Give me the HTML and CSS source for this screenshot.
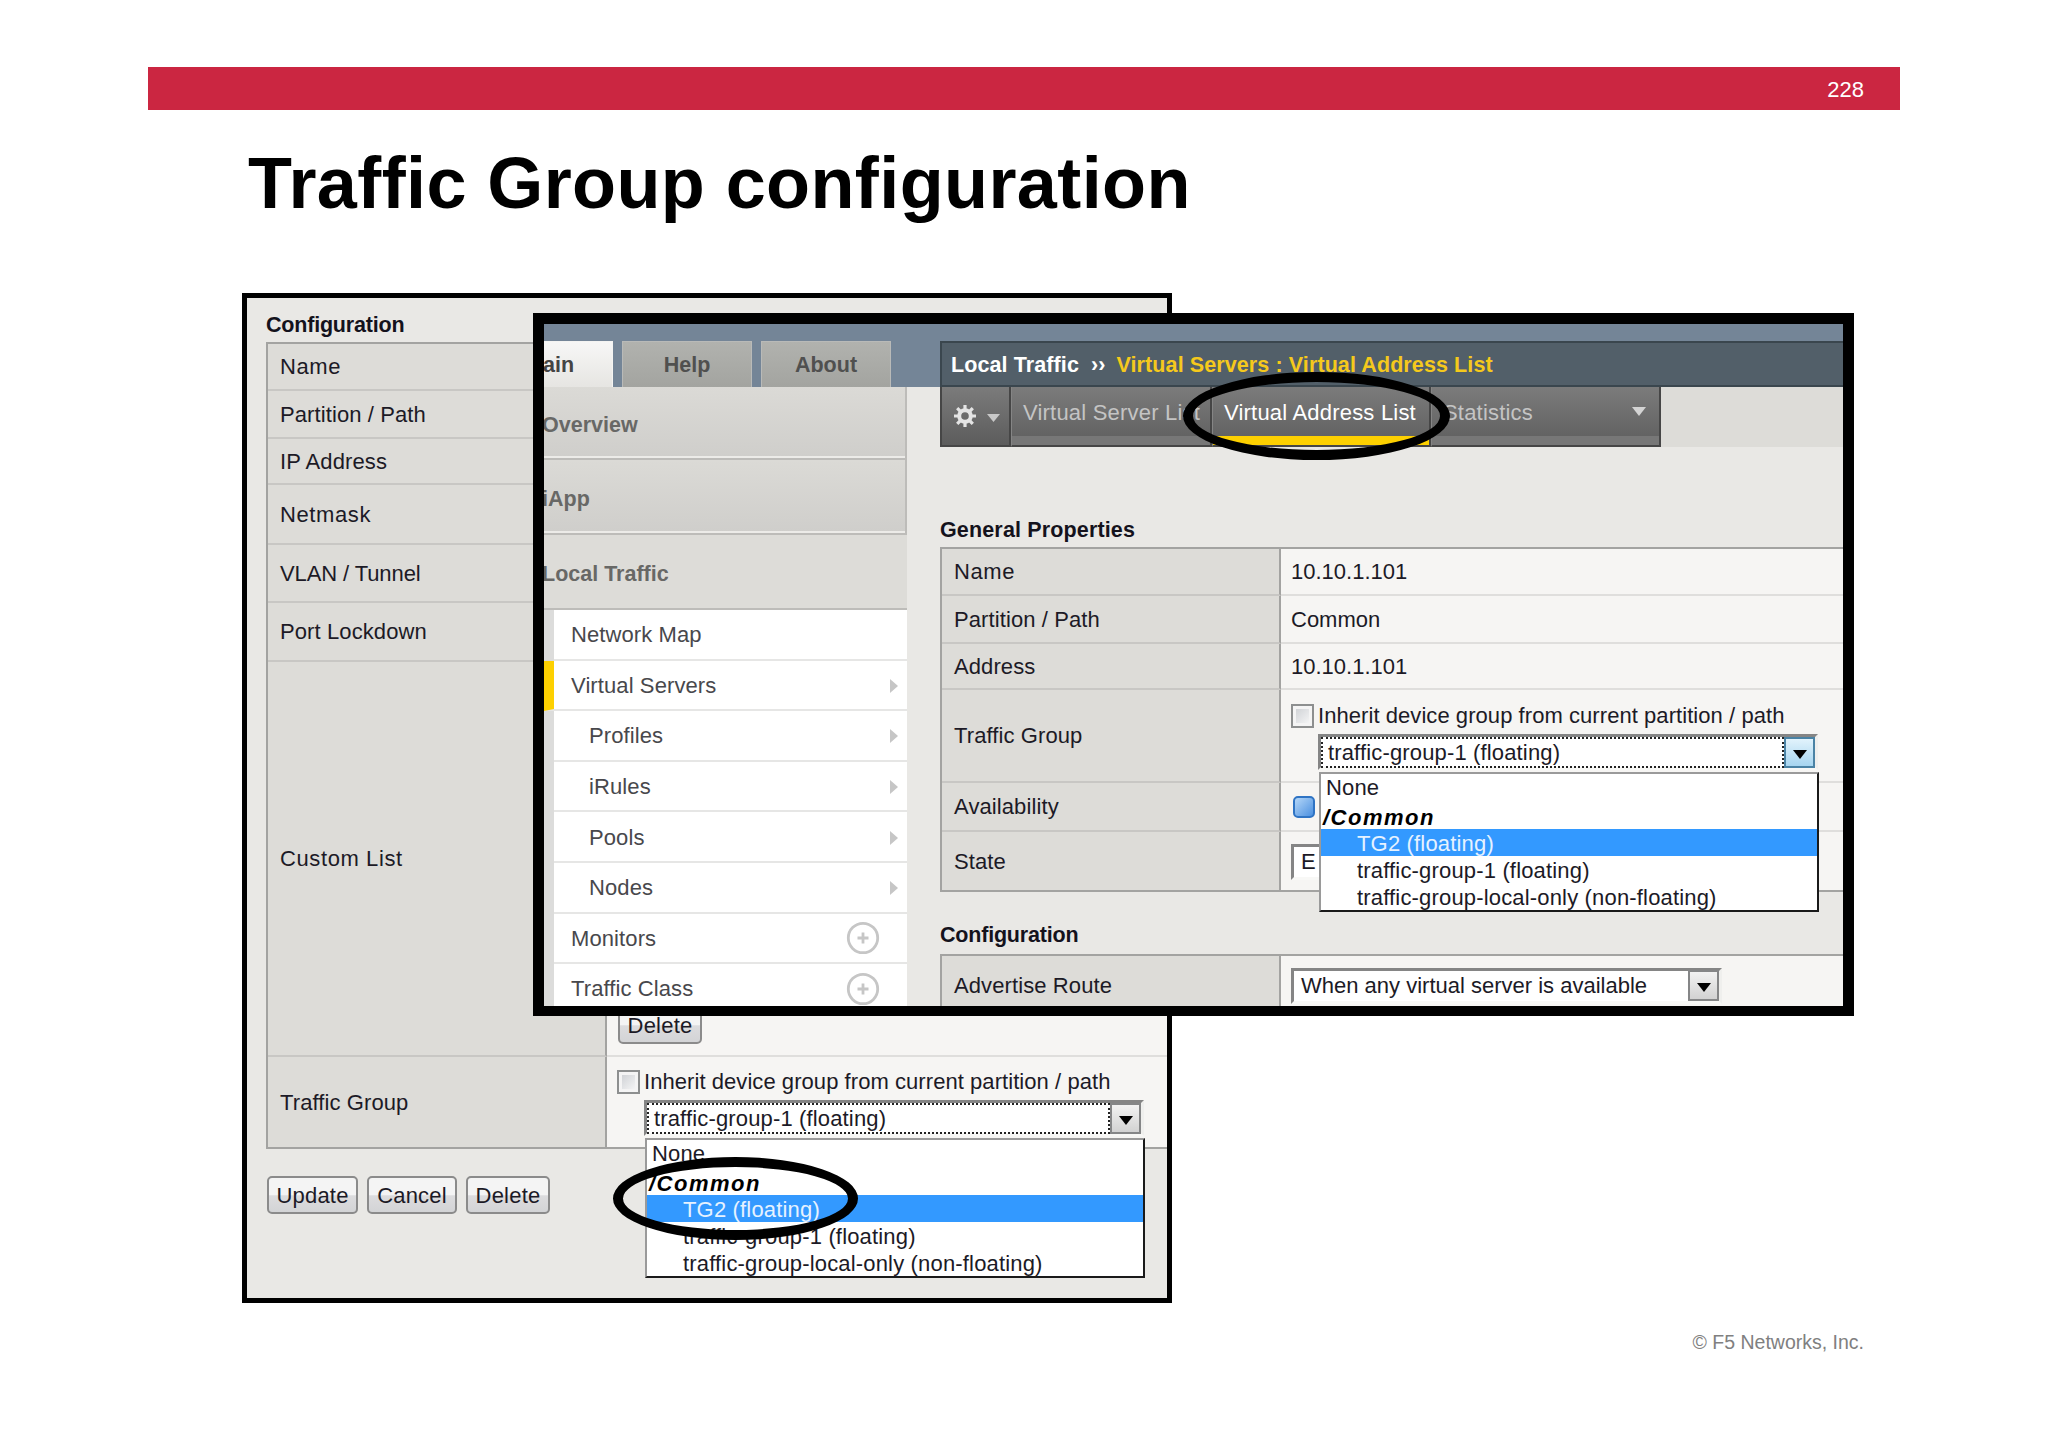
FILE: index.html
```html
<!DOCTYPE html>
<html lang="en">

<head>
    <meta charset="utf-8">
    <title>Traffic Group configuration</title>
    <link rel="stylesheet" href="styles.css">
</head>

<body>
    <div class="slide">
        <div class="slide-bar">228</div>
        <h1>Traffic Group configuration</h1>
        <div class="copyright">© F5 Networks, Inc.</div>

        <!-- Self IP window -->
        <div class="window self-ip">
            <h2 class="narrow">Configuration</h2>
            <div class="props self-ip-props">
                <div class="label wide">Name</div>
                <div class="value"></div>
                <div class="label">Partition / Path</div>
                <div class="value"></div>
                <div class="label">IP Address</div>
                <div class="value"></div>
                <div class="label wide">Netmask</div>
                <div class="value"></div>
                <div class="label tight">VLAN / Tunnel</div>
                <div class="value"></div>
                <div class="label">Port Lockdown</div>
                <div class="value"></div>
                <div class="label wide">Custom List</div>
                <div class="value list-cell"><button class="btn btn-delete">Delete</button></div>
                <div class="label last">Traffic Group</div>
                <div class="value group-cell last">
                    <label class="inherit"><span class="checkbox"></span>Inherit device group from current partition / path</label>
                    <div class="group-select">
                        <div class="select focused">
                            <span class="select-text">traffic-group-1 (floating)</span>
                            <span class="select-button"><svg width="14" height="9"><path d="M0 0H14L7 9Z"/></svg></span>
                        </div>
                        <div class="options">
                            <div class="option none">None</div>
                            <div class="option group">/Common</div>
                            <div class="option child selected">TG2 (floating)</div>
                            <div class="option child">traffic-group-1 (floating)</div>
                            <div class="option child">traffic-group-local-only (non-floating)</div>
                        </div>
                    </div>
                </div>
            </div>
            <div class="buttons">
                <button class="btn btn-update">Update</button>
                <button class="btn btn-cancel">Cancel</button>
                <button class="btn btn-delete">Delete</button>
            </div>
        </div>
        <div class="ring ring-option"></div>

        <!-- Virtual address window -->
        <div class="window virtual-address">
            <div class="sidebar">
                <div class="tabs">
                    <div class="tab active">ain</div>
                    <div class="tab">Help</div>
                    <div class="tab">About</div>
                </div>
                <div class="section first">Overview</div>
                <div class="section">iApp</div>
                <div class="section open">Local Traffic</div>
                <div class="menu">
                    <div class="menu-item">Network Map</div>
                    <div class="menu-item current">Virtual Servers<svg class="chevron" width="8" height="14"><path d="M0 0L8 7L0 14Z"/></svg></div>
                    <div class="menu-item sub">Profiles<svg class="chevron" width="8" height="14"><path d="M0 0L8 7L0 14Z"/></svg></div>
                    <div class="menu-item sub">iRules<svg class="chevron" width="8" height="14"><path d="M0 0L8 7L0 14Z"/></svg></div>
                    <div class="menu-item sub">Pools<svg class="chevron" width="8" height="14"><path d="M0 0L8 7L0 14Z"/></svg></div>
                    <div class="menu-item sub">Nodes<svg class="chevron" width="8" height="14"><path d="M0 0L8 7L0 14Z"/></svg></div>
                    <div class="menu-item">Monitors<svg class="plus" width="34" height="34"><circle cx="17" cy="17" r="14.7"/><path d="M17 11.5V22.5M11.5 17H22.5"/></svg></div>
                    <div class="menu-item">Traffic Class<svg class="plus" width="34" height="34"><circle cx="17" cy="17" r="14.7"/><path d="M17 11.5V22.5M11.5 17H22.5"/></svg></div>
                </div>
            </div>

            <div class="main">
                <div class="breadcrumb"><span>Local Traffic</span><span class="arrows">››</span><span class="path">Virtual Servers : Virtual Address List</span></div>
                <div class="toolbar">
                    <div class="tool gear">
                        <svg width="24" height="24" viewBox="-12 -12 24 24">
                            <g stroke="#e4e4e4" stroke-width="3.2">
                                <path d="M0 -11V-6M0 11V6M-11 0H-6M11 0H6M-7.8 -7.8L-4.5 -4.5M7.8 7.8L4.5 4.5M-7.8 7.8L-4.5 4.5M7.8 -7.8L4.5 -4.5"/>
                            </g>
                            <circle r="5.8" fill="none" stroke="#e4e4e4" stroke-width="4"/>
                        </svg>
                        <svg class="caret" width="13" height="8"><path d="M0 0H13L6.5 8Z" fill="#c8c8c8"/></svg>
                    </div>
                    <div class="tool list">Virtual Server List</div>
                    <div class="tool address active">Virtual Address List</div>
                    <div class="tool stats">Statistics<svg width="14" height="9"><path d="M0 0H14L7 9Z" fill="#d4d4d4"/></svg></div>
                    <div class="tool-rest"></div>
                </div>

                <h2 class="general">General Properties</h2>
                <div class="props general-props">
                    <div class="label wide">Name</div>
                    <div class="value">10.10.1.101</div>
                    <div class="label">Partition / Path</div>
                    <div class="value">Common</div>
                    <div class="label">Address</div>
                    <div class="value">10.10.1.101</div>
                    <div class="label">Traffic Group</div>
                    <div class="value group-cell">
                        <label class="inherit"><span class="checkbox"></span>Inherit device group from current partition / path</label>
                        <div class="group-select">
                            <div class="select focused hot">
                                <span class="select-text">traffic-group-1 (floating)</span>
                                <span class="select-button"><svg width="14" height="9"><path d="M0 0H14L7 9Z"/></svg></span>
                            </div>
                            <div class="options">
                                <div class="option none">None</div>
                                <div class="option group">/Common</div>
                                <div class="option child selected">TG2 (floating)</div>
                                <div class="option child">traffic-group-1 (floating)</div>
                                <div class="option child">traffic-group-local-only (non-floating)</div>
                            </div>
                        </div>
                    </div>
                    <div class="label">Availability</div>
                    <div class="value"><span class="status"></span></div>
                    <div class="label last">State</div>
                    <div class="value last">
                        <div class="select state"><span class="select-text">E</span></div>
                    </div>
                </div>

                <h2 class="config narrow">Configuration</h2>
                <div class="props config-props">
                    <div class="label">Advertise Route</div>
                    <div class="value">
                        <div class="select route">
                            <span class="select-text">When any virtual server is available</span>
                            <span class="select-button"><svg width="14" height="9"><path d="M0 0H14L7 9Z"/></svg></span>
                        </div>
                    </div>
                </div>
            </div>
        </div>
        <div class="ring ring-tab"></div>
    </div>
</body>

</html>
```
FILE: styles.css
```css
* {
    box-sizing: border-box;
}

body {
    margin: 0;
    background-color: #fff;
    font-family: "Liberation Sans", Arial, sans-serif;
    font-size: 22px;
    line-height: 26px;
    color: #1c1a26;
}

.slide {
    position: relative;
    width: 2048px;
    height: 1447px;
    padding: 67px 148px 0;
    overflow: hidden;
}

.slide-bar {
    height: 43px;
    padding-right: 36px;
    background-color: #cb2641;
    color: #fff;
    line-height: 45px;
    text-align: right;
}

h1 {
    margin: 33px 0 0 100px;
    font-size: 72px;
    line-height: 80px;
    letter-spacing: 0.4px;
    color: #000;
    white-space: nowrap;
}

h2 {
    margin: 0;
    font-size: 21.5px;
    line-height: 26px;
    letter-spacing: 0.15px;
    color: #14121c;
}

.narrow {
    letter-spacing: -0.2px;
}

.copyright {
    position: absolute;
    right: 184px;
    top: 1329px;
    font-size: 19.5px;
    color: #808080;
}

/* windows lie freely on the slide and overlap */
.window {
    position: absolute;
    border: 5px solid #000;
    background-color: #e9e8e5;
    overflow: hidden;
    white-space: nowrap;
    isolation: isolate;
}

.self-ip {
    left: 242px;
    top: 293px;
    width: 930px;
    height: 1010px;
    padding: 14px 0 0 19px;
}

.virtual-address {
    left: 533px;
    top: 313px;
    width: 1321px;
    height: 703px;
    border-width: 11px 11px 10px;
    background: linear-gradient(#748597 63px, #e9e8e5 63px);
    display: flex;
}

.ring {
    position: absolute;
    border: 10px solid #000;
    border-radius: 50%;
}

.ring-option {
    left: 613px;
    top: 1157px;
    width: 245px;
    height: 83px;
}

.ring-tab {
    left: 1183px;
    top: 372px;
    width: 267px;
    height: 88px;
}

/* property tables */
.props {
    display: grid;
    grid-template-columns: 339px 1fr;
    border-top: 2px solid #a3a3a1;
    border-left: 2px solid #a3a3a1;
}

.self-ip-props {
    margin-top: 4px;
    grid-template-rows: 47px 48px 46px 60px 58px 59px 395px 92px;
}

.general-props {
    margin-top: 4px;
    grid-template-rows: 47px 48px 46px 93px 49px 60px;
}

.config-props {
    margin-top: 6px;
    grid-template-rows: 61px;
}

.label,
.value {
    display: flex;
    align-items: center;
    padding: 1px 0 0 10px;
    border-bottom: 2px solid #c8c7c4;
}

.label {
    padding-left: 12px;
    background-color: #dddcd8;
    border-right: 2px solid #a3a3a1;
    letter-spacing: 0.1px;
}

.label.wide {
    letter-spacing: 0.6px;
}

.label.tight {
    letter-spacing: -0.1px;
}

.value {
    background-color: #f6f5f3;
    border-bottom-color: #dfdedc;
}

.last {
    border-bottom-color: #a3a3a1;
}

.list-cell {
    align-items: flex-end;
    padding: 0 0 11px 11px;
}

.group-cell {
    flex-direction: column;
    align-items: flex-start;
    padding-top: 13px;
}

.inherit {
    display: flex;
    align-items: center;
    height: 24px;
    letter-spacing: 0.06px;
}

.checkbox {
    width: 23px;
    height: 24px;
    margin-right: 4px;
    border: 2px solid #8d8f8f;
    background: linear-gradient(135deg, #c9ccd0, #fbfbfb);
    box-shadow: inset 0 0 0 3px #f4f4f4;
}

.group-select {
    position: relative;
    margin: 6px 0 0 27px;
    width: 500px;
}

.select {
    display: flex;
    align-items: center;
    height: 36px;
    border: 3px solid #858585;
    border-right-color: #efefed;
    border-bottom-color: #f8f8f6;
    background-color: #fff;
}

.select-text {
    flex: 1;
    padding-left: 7px;
}

.focused .select-text {
    height: 31px;
    padding-left: 5px;
    line-height: 28px;
    letter-spacing: 0.15px;
    border: 2px dotted #222;
}

.select-button {
    display: flex;
    align-items: center;
    justify-content: center;
    width: 31px;
    height: 31px;
    padding-top: 4px;
    border: 2px solid #858687;
    background: linear-gradient(#f2f2f2, #d2d2d2);
}

.hot .select-button {
    border-color: #4a83a5;
    background: linear-gradient(#e2f3fc, #a6d5f0);
}

.state {
    width: 150px;
}

.route {
    width: 431px;
    margin-top: -1px;
}

.options {
    position: absolute;
    z-index: 1;
    left: 1px;
    top: 38px;
    width: 500px;
    height: 140px;
    border: 2px solid #1a1a1a;
    border-top-color: #9a9a9a;
    border-left-color: #9a9a9a;
    background-color: #fff;
    overflow: hidden;
}

.option {
    height: 27px;
    line-height: 30px;
    padding-left: 5px;
    letter-spacing: 0.17px;
}

.none {
    height: 28px;
    line-height: 28px;
}

.group {
    height: 27px;
    line-height: 31px;
    padding-left: 2px;
    font-weight: bold;
    font-style: italic;
    letter-spacing: 1.5px;
    color: #000;
}

.child {
    padding-left: 36px;
}

.selected {
    background-color: #3399ff;
    color: #e6f2ff;
}

.status {
    width: 22px;
    height: 22px;
    margin-left: 2px;
    border: 2px solid #2f74c4;
    border-radius: 5px;
    background: linear-gradient(135deg, #b5d7f8, #4b90e0);
}

/* buttons */
.buttons {
    display: flex;
    gap: 9px;
    margin: 27px 0 0 1px;
}

.btn {
    height: 38px;
    padding: 1px 0 0;
    border: 2px solid #8b8b8b;
    border-radius: 5px;
    background: linear-gradient(#f4f4f4 50%, #dcdcde 52%, #d3d4d6);
    font: 22px/30px "Liberation Sans", Arial, sans-serif;
    letter-spacing: 0.2px;
    color: #1c1a26;
}

.btn-update {
    width: 91px;
}

.btn-cancel {
    width: 90px;
}

.btn-delete {
    width: 84px;
}

/* sidebar */
.sidebar {
    width: 363px;
}

.tabs {
    display: flex;
    gap: 9px;
    height: 63px;
    padding-top: 17px;
}

.tab {
    width: 130px;
    border: 1px solid #b9bab8;
    border-bottom: 0;
    background: linear-gradient(#b1b2ae, #a3a4a0);
    color: #50504f;
    font-size: 21.5px;
    font-weight: bold;
    line-height: 46px;
    text-align: center;
}

.tab.active {
    width: 69px;
    border-color: #f4f4f2;
    border-left: 0;
    background: linear-gradient(#f7f7f6, #e6e5e2);
    color: #444;
    text-align: left;
    text-indent: -1px;
}

.section {
    height: 75px;
    border-right: 2px solid #bdbcb9;
    border-bottom: 2px solid #bdbcb9;
    box-shadow: inset 0 -2px #ecebe8;
    background: linear-gradient(#dbdad6, #cfcecb);
    color: #686866;
    font-size: 21.5px;
    font-weight: bold;
    line-height: 78px;
    text-indent: -2px;
}

.section.first {
    height: 73px;
    line-height: 77px;
}

.section.open {
    border-right: 0;
    box-shadow: none;
    background: #dddcd8;
}

.menu {
    border-left: 10px solid #dcdcdb;
}

.menu-item {
    display: flex;
    align-items: center;
    justify-content: space-between;
    height: 50.6px;
    padding: 2px 9px 0 17px;
    border-bottom: 2px solid #e6e6e5;
    background-color: #fff;
    color: #48484c;
    letter-spacing: 0.1px;
}

.menu-item.current {
    margin-left: -10px;
    border-left: 10px solid #fdd000;
}

.menu-item.sub {
    padding-left: 35px;
}

.chevron {
    fill: #c6c6c6;
}

.plus {
    margin: -1px 18px 0 0;
    fill: none;
    stroke: #c6c6c6;
    stroke-width: 2.8;
}

/* main pane */
.main {
    flex: 1;
    margin-left: 33px;
    padding-top: 17px;
}

.breadcrumb {
    display: flex;
    height: 46px;
    padding-left: 9px;
    border: 2px solid #3a464e;
    border-right: 0;
    background-color: #525f69;
    color: #fff;
    font-size: 21.5px;
    font-weight: bold;
    line-height: 45px;
    letter-spacing: 0.1px;
}

.arrows {
    margin: 0 11px 0 12px;
}

.path {
    color: #f5c91c;
}

.toolbar {
    display: flex;
    height: 60px;
}

.tool {
    padding-left: 11px;
    border-right: 2px solid #464646;
    border-bottom: 2px solid #464646;
    border-left: 1px solid #858585;
    background: linear-gradient(#7b7b7b, #636363 49px, #777 49px);
    color: #c4c4c4;
    line-height: 51px;
    letter-spacing: 0.2px;
}

.tool.active {
    background: linear-gradient(#7b7b7b, #636363 49px, #fdd000 49px);
    color: #fff;
}

.gear {
    display: flex;
    align-items: center;
    gap: 10px;
    width: 71px;
    border-left: 2px solid #464646;
    background: linear-gradient(#7b7b7b, #5c5c5c);
}

.caret {
    margin-top: 3px;
}

.list {
    width: 201px;
}

.address {
    width: 219px;
}

.stats {
    display: flex;
    justify-content: space-between;
    width: 230px;
    padding-right: 13px;
}

.stats svg {
    margin-top: 20px;
}

.tool-rest {
    flex: 1;
    background-color: #dddcd8;
}

.general {
    margin-top: 70px;
}

.general-props .group-cell {
    padding-top: 14px;
}

.config {
    margin-top: 30px;
}
```
